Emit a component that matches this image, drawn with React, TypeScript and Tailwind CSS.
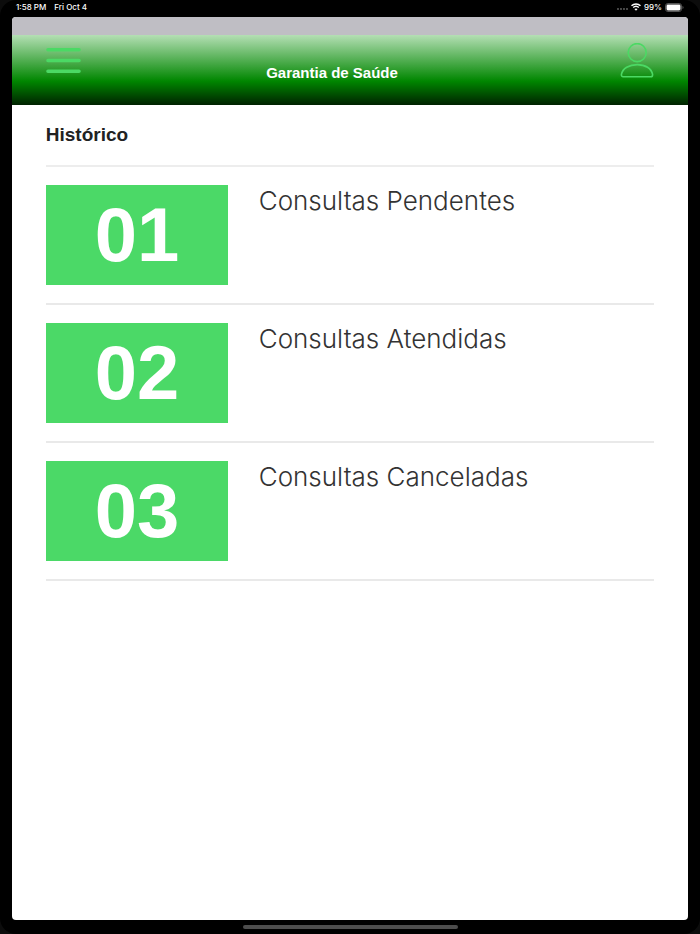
import React from 'react';

interface HistoryItem {
    id: string;
    number: string;
    label: string;
}

const HISTORY_ITEMS: HistoryItem[] = [
    { id: 'pending', number: '01', label: 'Consultas Pendentes' },
    { id: 'attended', number: '02', label: 'Consultas Atendidas' },
    { id: 'canceled', number: '03', label: 'Consultas Canceladas' },
];

function WifiIcon() {
    return (
        <svg width="10" height="8" viewBox="0 0 20 16" fill="none" stroke="white" strokeWidth="2.8" aria-hidden="true">
            <path d="M1 5.6C6 .8 14 .8 19 5.6" />
            <path d="M4.4 9.2c3.2-3 8-3 11.2 0" />
            <path d="M10 15.4 6.8 12c1.8-1.6 4.6-1.6 6.4 0Z" fill="white" stroke="none" />
        </svg>
    );
}

function BatteryIcon() {
    return (
        <svg width="19" height="9" viewBox="0 0 19 9" aria-hidden="true">
            <rect x="0.5" y="0.5" width="16" height="8" rx="2.4" fill="none" stroke="#555" />
            <rect x="1.5" y="1.5" width="14" height="6" rx="1.4" fill="white" />
            <path d="M17.6 3v3c1.1-.4 1.1-2.6 0-3Z" fill="#777" />
        </svg>
    );
}

function StatusBar() {
    return (
        <div className="flex h-[17px] items-center justify-between px-4 pb-[3px] text-[8px] leading-none font-medium text-white">
            <div className="flex gap-2">
                <span>1:58 PM</span>
                <span>Fri Oct 4</span>
            </div>
            <div className="flex items-center gap-[3px]">
                <svg width="11" height="6" viewBox="0 0 11 6" fill="#666" aria-hidden="true">
                    <circle cx="1" cy="5" r="0.9" />
                    <circle cx="4" cy="5" r="0.9" />
                    <circle cx="7" cy="5" r="0.9" />
                    <circle cx="10" cy="5" r="0.9" />
                </svg>
                <WifiIcon />
                <span>99%</span>
                <BatteryIcon />
            </div>
        </div>
    );
}

function Header() {
    return (
        <header className="grid h-[70px] grid-cols-[1fr_auto_1fr] items-start bg-[linear-gradient(to_bottom,#b4dfb4_0%,#008600_66%,#002200_100%)] px-[5%]">
            <button type="button" aria-label="Menu" className="mt-3 justify-self-start">
                <svg width="35" height="28" viewBox="0 0 35 28" fill="none" stroke="#4bd964" strokeWidth="3.6" strokeLinecap="round">
                    <path d="M2 2.7h31M2 13.5h31M2 24.2h31" />
                </svg>
            </button>
            <h1 className="mt-7 pr-9 text-[15px] leading-5 font-bold text-white">Garantia de Saúde</h1>
            <button type="button" aria-label="Perfil" className="mt-2 justify-self-end">
                <svg width="34" height="36" viewBox="0 0 34 36" fill="none" stroke="#4bd964" strokeWidth="1.6">
                    <circle cx="17.2" cy="9.6" r="9" />
                    <path d="M3.2 33.8C1.8 33.8 1.4 32.8 1.4 31.4C2.6 25.4 9 21.6 17.2 21.6S31.4 25.4 32.6 31.4C32.6 32.8 32.2 33.8 30.8 33.8Z" />
                </svg>
            </button>
        </header>
    );
}

export default function App() {
    return (
        <div className="min-h-screen bg-[#0c0c0c] font-['Inter',sans-serif]">
            <div className="flex min-h-screen flex-col rounded-2xl bg-black">
                <StatusBar />

                <div className="mx-3 flex grow flex-col overflow-hidden rounded-[4px] bg-white font-['Liberation_Sans',sans-serif]">
                    <div className="h-[18px] bg-[#bfbec4]" />
                    <Header />

                    <main className="px-[5%] pt-[18px]">
                        <h2 className="border-b-2 border-[#ededed] pb-[18px] text-[19px] leading-6 font-bold text-[#222]">
                            Histórico
                        </h2>
                        <ul>
                            {HISTORY_ITEMS.map(item => (
                                <li key={item.id} className="border-b-2 border-[#e9e9e9] py-[18px]">
                                    <a href={`#${item.id}`} className="flex gap-[5%]">
                                        <span className="flex h-[100px] w-[30%] items-center justify-center bg-[#4bd967] text-[76px] leading-none font-bold text-white">
                                            {item.number}
                                        </span>
                                        <span className="font-['Inter',sans-serif] text-[26px] leading-8 font-light text-[#333]">
                                            {item.label}
                                        </span>
                                    </a>
                                </li>
                            ))}
                        </ul>
                    </main>
                </div>

                {/* Home indicator */}
                <div className="flex h-[14px] items-center justify-center">
                    <div className="h-1 w-[215px] rounded-full bg-[#4d4d4d]" />
                </div>
            </div>
        </div>
    );
}
